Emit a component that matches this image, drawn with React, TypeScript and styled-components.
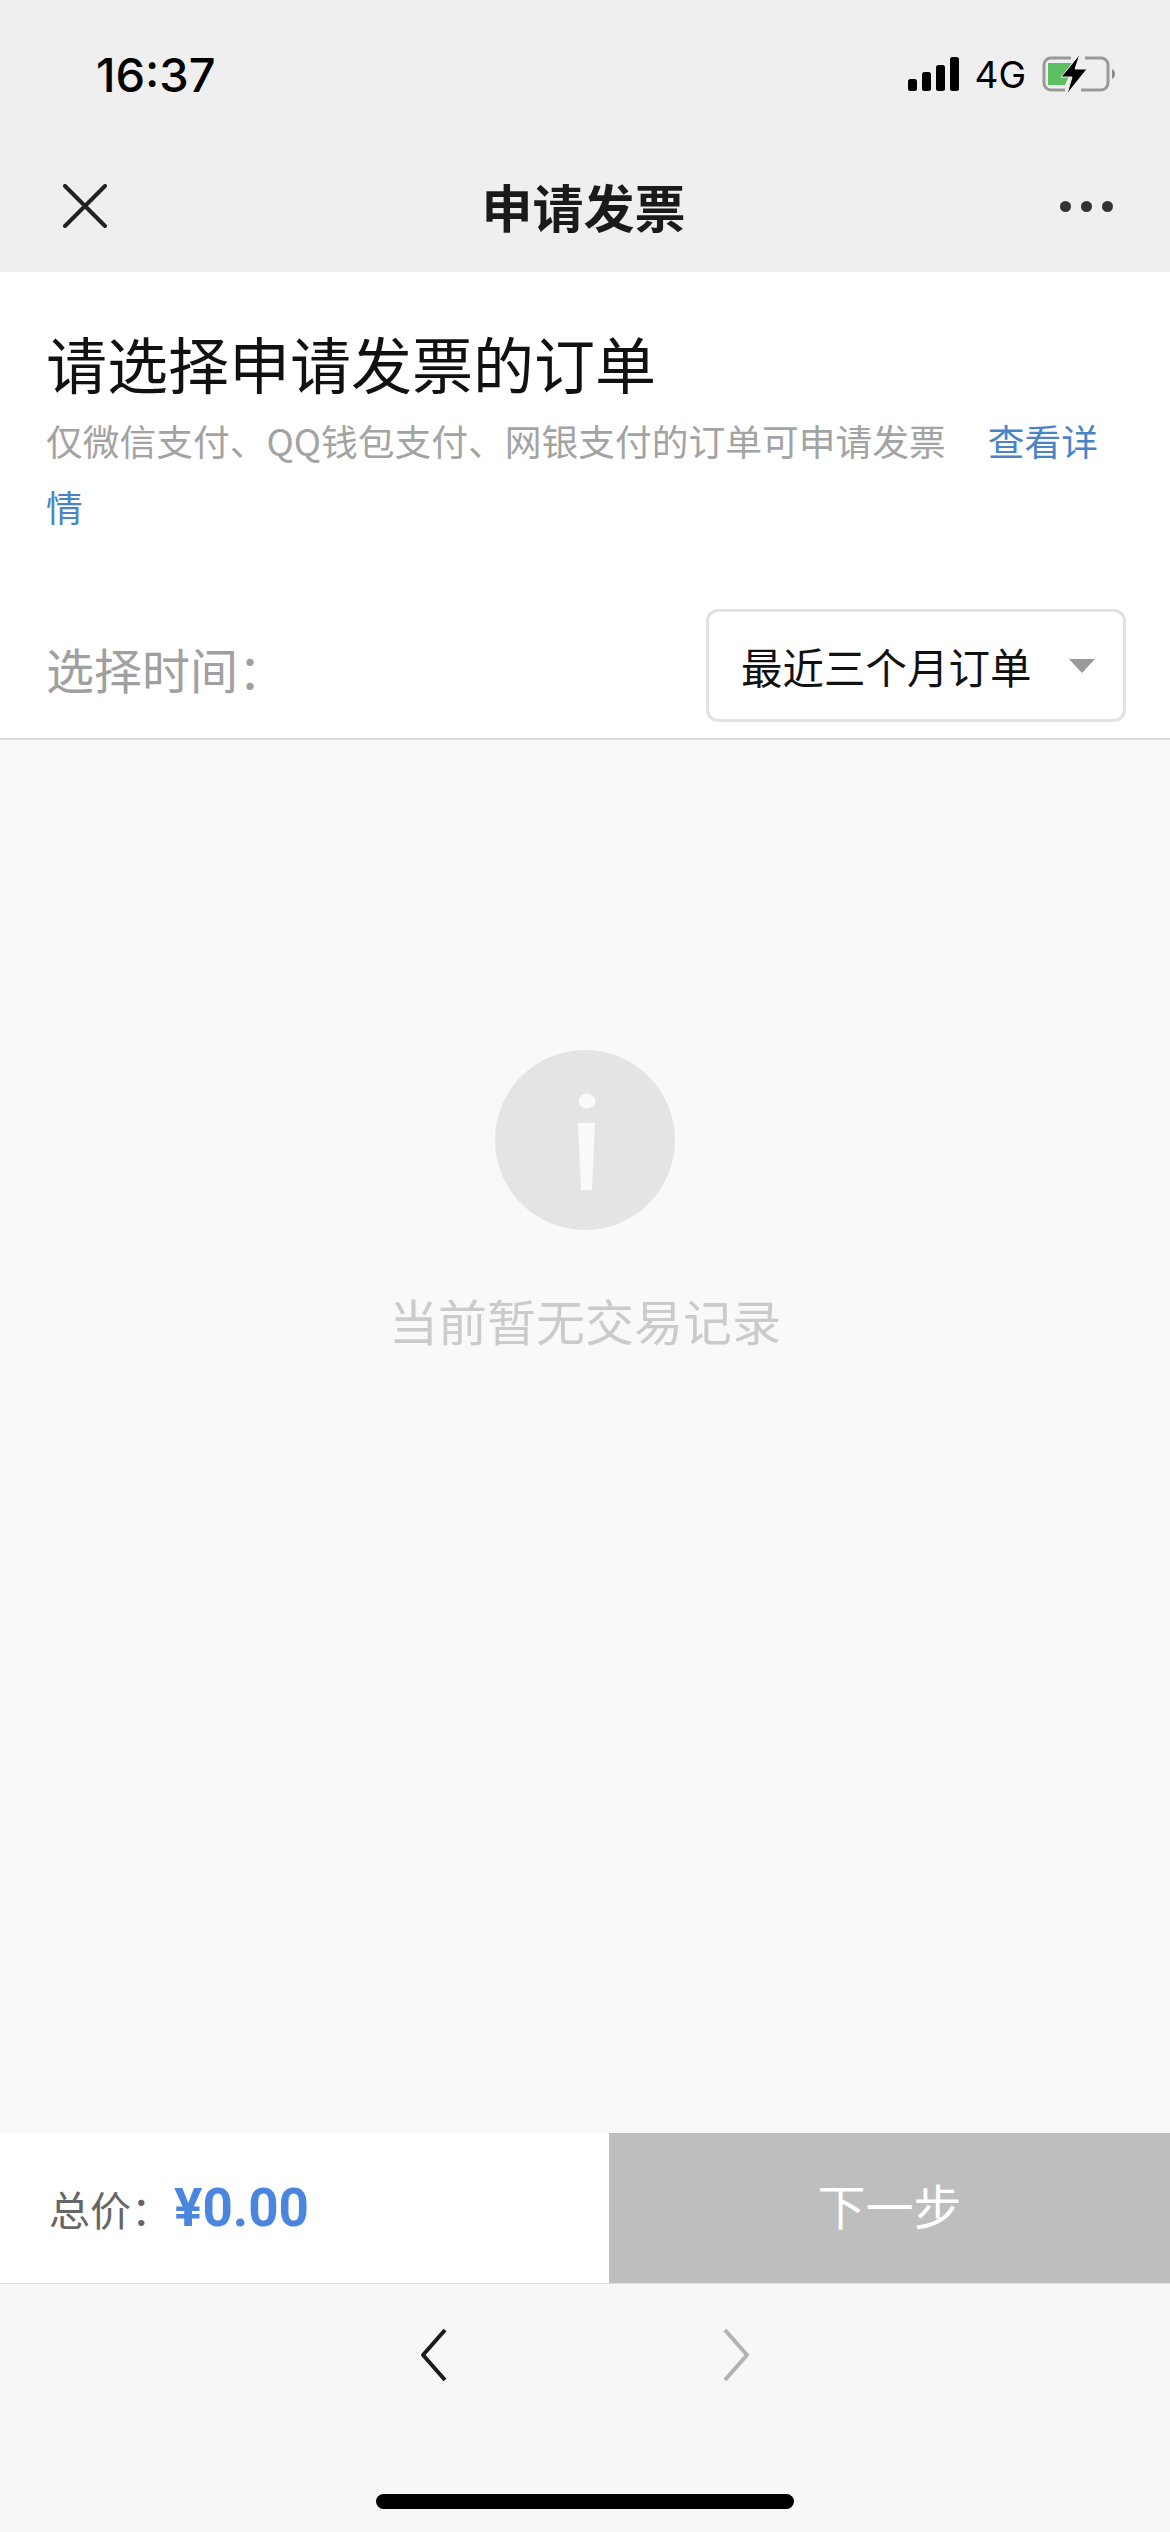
import React from 'react';
import styled, {createGlobalStyle} from "styled-components";

const GlobalStyle = createGlobalStyle`
  html, body {
    margin: 0;
    padding: 0;
    background: #f7f7f7;
  }
  * {
    box-sizing: border-box;
  }
`

const SignalIcon = () => (
    <svg width="51" height="34" viewBox="0 0 51 34" fill="#000">
        <rect x="0" y="22" width="9" height="12" rx="2.5"/>
        <rect x="14" y="15" width="9" height="19" rx="2.5"/>
        <rect x="28" y="8" width="9" height="26" rx="2.5"/>
        <rect x="42" y="0" width="9" height="34" rx="2.5"/>
    </svg>
)

const BatteryIcon = () => (
    <svg width="74" height="40" viewBox="0 0 74 40">
        <path d="M30 4H10a7 7 0 0 0-7 7v18a7 7 0 0 0 7 7h14M44 4h16a7 7 0 0 1 7 7v18a7 7 0 0 1-7 7H40" fill="none" stroke="#999" strokeWidth="3"/>
        <path d="M7 9h24l-10 13h7l-4 9H7z" fill="#5cbf62"/>
        <path d="M71 15c2 1 3 3 3 5s-1 4-3 5z" fill="#888"/>
        <path d="M39 0 20 23h11l-5 17 20-25H34z" fill="#000" stroke="#efefef" strokeWidth="1"/>
    </svg>
)

const CloseIcon = () => (
    <svg width="44" height="44" viewBox="0 0 44 44" stroke="#222" strokeWidth="4" strokeLinecap="round">
        <path d="M2 2 42 42M42 2 2 42"/>
    </svg>
)

const InfoIcon = () => (
    <svg width="180" height="180" viewBox="0 0 180 180">
        <circle cx="90" cy="90" r="90" fill="#e4e4e4"/>
        <ellipse cx="92" cy="51" rx="8.5" ry="7.5" fill="#fafafa"/>
        <path d="M83 73h17l-3 67H86z" fill="#fafafa"/>
    </svg>
)

const BackIcon = ({color}: { color: string }) => (
    <svg width="28" height="54" viewBox="0 0 28 54" fill="none" stroke={color} strokeWidth="4" strokeLinejoin="round">
        <path d="M25 2 3 27l22 25"/>
    </svg>
)

const ForwardIcon = ({color}: { color: string }) => (
    <svg width="28" height="54" viewBox="0 0 28 54" fill="none" stroke={color} strokeWidth="4" strokeLinejoin="round">
        <path d="M3 2l22 25L3 52"/>
    </svg>
)

export default function App() {
    return (
        <Page>
            <GlobalStyle/>
            <Header>
                <StatusBar>
                    <Time>16:37</Time>
                    <StatusIcons>
                        <SignalIcon/>
                        <Network>4G</Network>
                        <BatteryIcon/>
                    </StatusIcons>
                </StatusBar>
                <NavBar>
                    <CloseIcon/>
                    <NavTitle>申请发票</NavTitle>
                    <MoreDots>
                        <Dot/>
                        <Dot/>
                        <Dot/>
                    </MoreDots>
                </NavBar>
            </Header>

            <Intro>
                <Heading>请选择申请发票的订单</Heading>
                <Notice>
                    仅微信支付、QQ钱包支付、网银支付的订单可申请发票
                    <DetailLink>查看详情</DetailLink>
                </Notice>
                <TimeRow>
                    <TimeLabel>选择时间：</TimeLabel>
                    <TimeSelect>
                        最近三个月订单
                        <Caret/>
                    </TimeSelect>
                </TimeRow>
            </Intro>

            <Empty>
                <InfoIcon/>
                <EmptyText>当前暂无交易记录</EmptyText>
            </Empty>

            <Footer>
                <Total>
                    <TotalLabel>总价：</TotalLabel>
                    <TotalPrice>¥0.00</TotalPrice>
                </Total>
                <NextButton>下一步</NextButton>
            </Footer>

            <Toolbar>
                <ToolbarArrows>
                    <BackIcon color="#1c1c1c"/>
                    <ForwardIcon color="#b2b2b2"/>
                </ToolbarArrows>
                <HomeIndicator/>
            </Toolbar>
        </Page>
    );
}

const cjk = `"Noto Sans CJK SC", "Liberation Sans", sans-serif`

//=========================HEADER==================================

const Page = styled.div`
  width: 1170px;
  height: 2532px;
  display: flex;
  flex-direction: column;
  background-color: #f9f9f9;
  font-family: ${cjk};
  overflow: hidden;
`

const Header = styled.header`
  height: 272px;
  background-color: #efefef;
`

const StatusBar = styled.div`
  height: 148px;
  padding: 0 55px 0 96px;
  display: flex;
  align-items: center;
  justify-content: space-between;
`

const Time = styled.div`
  font-family: Inter, "Liberation Sans", sans-serif;
  font-size: 47px;
  font-weight: 500;
  color: #000;
`

const StatusIcons = styled.div`
  display: flex;
  align-items: center;
  gap: 15px;
`

const Network = styled.div`
  font-family: Inter, "Liberation Sans", sans-serif;
  font-size: 37px;
  color: #000;
`

const NavBar = styled.div`
  height: 116px;
  padding: 0 57px 0 63px;
  display: flex;
  align-items: center;
  justify-content: space-between;
`

const NavTitle = styled.div`
  font-size: 51px;
  font-weight: 700;
  line-height: 60px;
  color: #1a1a1a;
`

const MoreDots = styled.div`
  width: 53px;
  display: flex;
  justify-content: space-between;
`

const Dot = styled.span`
  width: 11px;
  height: 11px;
  border-radius: 50%;
  background-color: #333;
`

//=========================INTRO===================================

const Intro = styled.section`
  height: 468px;
  padding: 0 46px;
  display: flex;
  flex-direction: column;
  background-color: #fff;
  border-bottom: 2px solid #dcdcdc;
`

const Heading = styled.h1`
  margin: 53px 0 0;
  font-size: 61px;
  font-weight: 400;
  line-height: 76px;
  color: #111;
`

const Notice = styled.p`
  margin: 6px 0 0;
  width: 1078px;
  font-size: 36.75px;
  line-height: 66px;
  color: #a3a3a3;
`

const DetailLink = styled.span`
  margin-left: 42px;
  color: #4a84c6;
`

const TimeRow = styled.div`
  margin-top: 70px;
  display: flex;
  align-items: center;
  justify-content: space-between;
  margin-right: -2px;
`

const TimeLabel = styled.div`
  padding-top: 4px;
  font-size: 48px;
  color: #a0a0a0;
`

const TimeSelect = styled.div`
  width: 420px;
  height: 113px;
  padding: 0 28px 0 32px;
  display: flex;
  align-items: center;
  justify-content: space-between;
  font-size: 41.5px;
  color: #111;
  background-color: #fff;
  border: 3px solid #e2e2e2;
  border-radius: 12px;
`

const Caret = styled.span`
  width: 0;
  height: 0;
  border-left: 13px solid transparent;
  border-right: 13px solid transparent;
  border-top: 14px solid #999;
`

//=========================EMPTY===================================

const Empty = styled.main`
  flex: 1;
  padding-top: 310px;
  display: flex;
  flex-direction: column;
  align-items: center;
`

const EmptyText = styled.div`
  margin-top: 55px;
  font-size: 49px;
  line-height: 70px;
  color: #cbcbcb;
`

//=========================FOOTER==================================

const Footer = styled.footer`
  height: 151px;
  display: flex;
  background-color: #fff;
  border-bottom: 1px solid #e0e0e0;
`

const Total = styled.div`
  width: 609px;
  padding-left: 49px;
  display: flex;
  align-items: center;
`

const TotalLabel = styled.span`
  font-size: 41px;
  color: #666;
`

const TotalPrice = styled.span`
  margin-left: 2px;
  font-family: Roboto, "Liberation Sans", sans-serif;
  font-size: 53px;
  font-weight: 700;
  color: #4a86e0;
`

const NextButton = styled.div`
  flex: 1;
  padding-bottom: 8px;
  display: flex;
  align-items: center;
  justify-content: center;
  font-size: 48px;
  color: #fff;
  background-color: #bebebe;
`

const Toolbar = styled.div`
  height: 248px;
  padding-top: 44px;
  display: flex;
  flex-direction: column;
  align-items: center;
  background-color: #f7f7f7;
`

const ToolbarArrows = styled.div`
  width: 330px;
  display: flex;
  justify-content: space-between;
`

const HomeIndicator = styled.div`
  margin-top: 112px;
  width: 418px;
  height: 15px;
  border-radius: 8px;
  background-color: #000;
`
